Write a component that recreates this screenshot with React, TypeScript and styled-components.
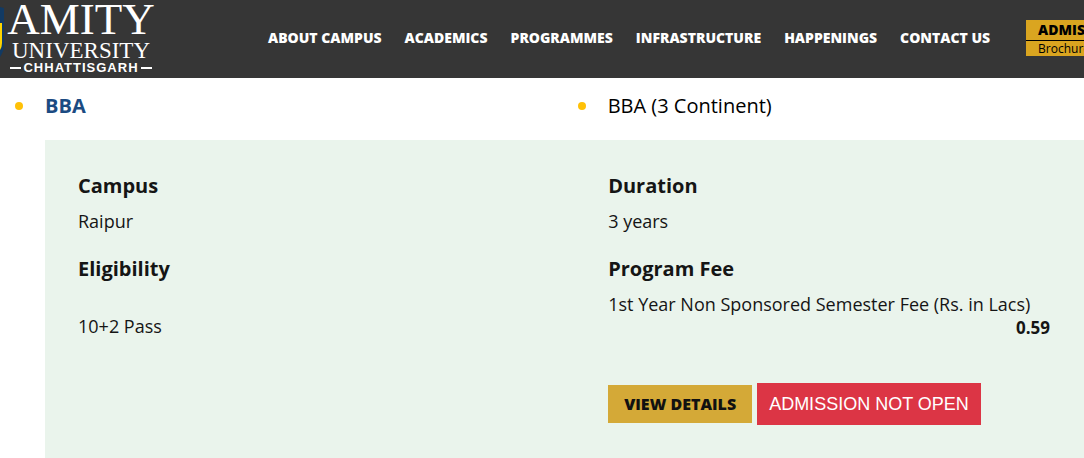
import React from "react";
import styled, { createGlobalStyle } from "styled-components";

const GlobalStyle = createGlobalStyle`
  *, *::before, *::after { box-sizing: border-box; }
  body {
    margin: 0;
    background: #fff;
    color: #000;
    font-family: "Open Sans", "Noto Sans", sans-serif;
    overflow-x: hidden;
  }
`;

const Header = styled.header`
  display: flex;
  align-items: center;
  height: 78px;
  overflow: hidden;
  background: #363636;
  white-space: nowrap;
`;

const Logo = styled.a`
  display: flex;
  flex: none;
  gap: 6px;
  width: 268px;
  height: 78px;
  color: #fff;
  text-decoration: none;
`;

const Crest = styled.svg`
  display: block;
  flex: none;
`;

const LogoWords = styled.span`
  display: flex;
  flex-direction: column;
  align-items: center;
  width: 142px;
  font-family: "Liberation Serif", serif;
`;

const LogoName = styled.span`
  font-size: 45px;
  line-height: 39px;
`;

const LogoKind = styled.span`
  font-size: 23px;
  line-height: 23px;
`;

const LogoPlace = styled.span`
  display: flex;
  align-items: center;
  gap: 2px;
  align-self: stretch;
  font: bold 13px/12px "Liberation Sans", sans-serif;
  letter-spacing: 1px;

  &::before, &::after {
    content: "";
    flex: 1;
    height: 2px;
    background: #fff;
  }
`;

const Nav = styled.nav`
  display: flex;
  flex: none;
  gap: 23px;
  padding-bottom: 2px;
`;

const NavLink = styled.a`
  color: #fff;
  font-size: 14px;
  font-weight: 800;
  line-height: 20px;
  text-decoration: none;
`;

const Promo = styled.div`
  display: flex;
  flex: none;
  flex-direction: column;
  gap: 1px;
  margin: 0 0 2px 36px;
  background: #000;
`;

const PromoLink = styled.a<{ $strong?: boolean }>`
  padding: 0 12px;
  background: #daa520;
  color: #000;
  font-size: ${(p) => (p.$strong ? 14 : 12)}px;
  font-weight: ${(p) => (p.$strong ? 800 : 400)};
  line-height: ${(p) => (p.$strong ? 20 : 15)}px;
  text-decoration: none;
`;

const Programmes = styled.ul`
  display: grid;
  grid-template-columns: 10fr 9fr;
  margin: 0;
  padding: 14px 0 20px 15px;
  list-style: none;
`;

const Programme = styled.li`
  display: flex;
  align-items: center;
  gap: 22px;

  &::before {
    content: "";
    width: 8px;
    height: 8px;
    border-radius: 50%;
    background: #ffc107;
  }
`;

const ProgrammeLink = styled.a<{ $active?: boolean }>`
  color: ${(p) => (p.$active ? "#1b4b82" : "#000")};
  font-size: 20px;
  font-weight: ${(p) => (p.$active ? 700 : 400)};
  line-height: 28px;
  text-decoration: none;
`;

const Panel = styled.section`
  display: grid;
  grid-template-columns: 6fr 5fr;
  margin-left: 45px;
  padding: 32px 34px 32px 33px;
  min-height: 318px;
  background: #eaf4ec;
  color: #151515;
`;

const Heading = styled.h2`
  margin: 0 0 9px;
  font-size: 20px;
  font-weight: 700;
  line-height: 28px;
`;

const Text = styled.p<{ $spaced?: boolean }>`
  margin: 0 0 22px;
  padding-top: ${(p) => (p.$spaced ? 22 : 0)}px;
  font-size: 18px;
  line-height: 24px;
`;

const FeeTable = styled.table`
  width: 100%;
  border-collapse: collapse;
  font-size: 18px;
  line-height: 24px;

  th, td { display: block; padding: 0; }
  th { font-weight: 400; text-align: left; }
  td { font-size: 17px; font-weight: 700; text-align: right; }
`;

const Actions = styled.div`
  display: flex;
  align-items: center;
  gap: 5px;
  margin-top: 43px;
`;

const Button = styled.button<{ $danger?: boolean }>`
  padding: ${(p) => (p.$danger ? "9px 12px" : "7px 16px")};
  border: 0;
  background: ${(p) => (p.$danger ? "#dc3545" : "#d4a937")};
  color: ${(p) => (p.$danger ? "#fff" : "#111")};
  font-family: ${(p) => (p.$danger ? '"Liberation Sans", sans-serif' : "inherit")};
  font-size: ${(p) => (p.$danger ? 18 : 16)}px;
  font-weight: ${(p) => (p.$danger ? 400 : 800)};
  line-height: 24px;
  white-space: nowrap;
  cursor: pointer;
`;

const NAV = ["About Campus", "Academics", "Programmes", "Infrastructure", "Happenings", "Contact Us"];

export default function App() {
  return (
    <>
      <GlobalStyle />
      <Header>
        <Logo href="#">
          <Crest width="4" height="78" viewBox="0 0 4 78" aria-hidden="true">
            <path d="M0 7 L4 8 V46 Q4 51 0 57Z" fill="#123a63" />
            <path d="M0 23H2V43Q2 47 0 50Z" fill="#ffd400" />
          </Crest>
          <LogoWords>
            <LogoName>AMITY</LogoName>
            <LogoKind>UNIVERSITY</LogoKind>
            <LogoPlace>CHHATTISGARH</LogoPlace>
          </LogoWords>
        </Logo>
        <Nav>
          {NAV.map((label) => (
            <NavLink href="#" key={label}>{label.toUpperCase()}</NavLink>
          ))}
        </Nav>
        <Promo>
          <PromoLink href="#" $strong>ADMISSION</PromoLink>
          <PromoLink href="#">Brochure</PromoLink>
        </Promo>
      </Header>
      <main>
        <Programmes>
          <Programme><ProgrammeLink href="#" $active>BBA</ProgrammeLink></Programme>
          <Programme><ProgrammeLink href="#">BBA (3 Continent)</ProgrammeLink></Programme>
        </Programmes>
        <Panel>
          <div>
            <Heading>Campus</Heading>
            <Text>Raipur</Text>
            <Heading>Eligibility</Heading>
            <Text $spaced>10+2 Pass</Text>
          </div>
          <div>
            <Heading>Duration</Heading>
            <Text>3 years</Text>
            <Heading>Program Fee</Heading>
            <FeeTable>
              <tbody>
                <tr>
                  <th scope="row">1st Year Non Sponsored Semester Fee (Rs. in Lacs)</th>
                  <td>0.59</td>
                </tr>
              </tbody>
            </FeeTable>
            <Actions>
              <Button type="button">VIEW DETAILS</Button>
              <Button type="button" $danger>ADMISSION NOT OPEN</Button>
            </Actions>
          </div>
        </Panel>
      </main>
    </>
  );
}
